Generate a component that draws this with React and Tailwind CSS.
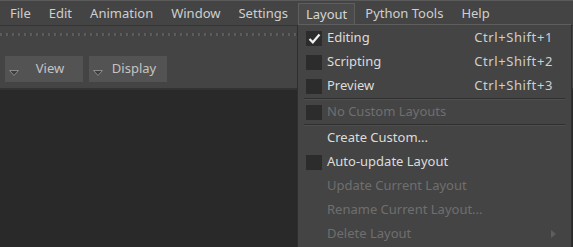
import React from 'react';

const menus = ['File', 'Edit', 'Animation', 'Window', 'Settings', 'Layout', 'Python Tools', 'Help'];

const items = [
  { label: 'Editing', box: true, checked: true, shortcut: 'Ctrl+Shift+1' },
  { label: 'Scripting', box: true, shortcut: 'Ctrl+Shift+2' },
  { label: 'Preview', box: true, shortcut: 'Ctrl+Shift+3' },
  { sep: true },
  { label: 'No Custom Layouts', box: true, disabled: true },
  { sep: true },
  { label: 'Create Custom...' },
  { label: 'Auto-update Layout', box: true },
  { label: 'Update Current Layout', disabled: true },
  { label: 'Rename Current Layout...', disabled: true },
  { label: 'Delete Layout', disabled: true, submenu: true },
];

const DropButton = ({ label }) => (
  <div className="flex h-[26px] w-[78px] items-center bg-[#535353] pl-[4px]">
    <svg width="10" height="6" viewBox="0 0 10 6" className="mt-[8px] shrink-0">
      <path d="M0.5 0.5 L9.5 0.5 L5 5.5 Z" fill="#3e3e3e" stroke="#8a8a8a" strokeWidth="1" />
    </svg>
    <span className="flex-1 pr-[2px] text-center text-[13px] text-[#c4c4c4]">{label}</span>
  </div>
);

export default function App() {
  return (
    <div
      className="relative h-[247px] w-[573px] overflow-hidden bg-[#292929] text-[13px]"
      style={{ fontFamily: '"Noto Sans", "Open Sans", sans-serif' }}
    >
      {/* menubar */}
      <div className="flex h-[26px] items-end border-t border-[#5a5a5a] border-b border-b-[#353535] bg-[#444444] pl-[2px]">
        {menus.map((m) => (
          <div
            key={m}
            className={
              m === 'Layout'
                ? 'mr-[2px] flex h-[22px] items-center border border-[#5e5e5e] border-b-0 bg-[#4a4a4a] px-[7px] text-[#d6d6d6]'
                : 'mr-[2px] flex h-[22px] items-center px-[8px] text-[#cfcfcf]'
            }
          >
            {m}
          </div>
        ))}
      </div>

      {/* toolbar */}
      <div className="flex h-[64px] flex-col border-b-2 border-[#323232] bg-[#444444]">
        <div className="mt-[7px] h-[3px] w-[297px] bg-[repeating-linear-gradient(90deg,#5c5c5c_0_2px,#3f3f3f_2px_3px,transparent_3px_6px)]" />
        <div className="mt-[20px] flex gap-[6px] pl-[5px]">
          <DropButton label="View" />
          <DropButton label="Display" />
        </div>
      </div>

      {/* dropdown menu */}
      <div className="absolute left-[297px] top-[24px] w-[275px] border border-[#2e2e2e] border-t-[#5e5e5e] bg-[#444444] pb-[1px] pt-[1px]">
        {items.map((it, i) =>
          it.sep ? (
            <div key={i} className="mx-[6px] h-[2px] border-t border-[#2f2f2f] border-b border-b-[#4e4e4e]" />
          ) : (
            <div key={i} className="flex h-[24px] items-center pl-[8px] pr-[18px]">
              <div className="flex w-[21px] shrink-0">
                {it.box && (
                  <div className="flex h-[15px] w-[16px] items-center justify-center bg-[#2c2c2c]">
                    {it.checked && (
                      <svg width="13" height="11" viewBox="0 0 13 11">
                        <path d="M1.5 6 L4.8 9.3 L11.5 1.5" fill="none" stroke="#f0f0f0" strokeWidth="2.2" />
                      </svg>
                    )}
                  </div>
                )}
              </div>
              <span className={it.disabled ? 'text-[#6f6f6f]' : 'text-[#dcdcdc]'}>{it.label}</span>
              <span className="ml-auto tracking-[0.6px] text-[#cfcfcf]">{it.shortcut}</span>
              {it.submenu && (
                <svg width="5" height="8" viewBox="0 0 5 8" className="ml-auto -mr-[3px]">
                  <path d="M0 0 L5 4 L0 8 Z" fill="#5e5e5e" />
                </svg>
              )}
            </div>
          )
        )}
      </div>
    </div>
  );
}
